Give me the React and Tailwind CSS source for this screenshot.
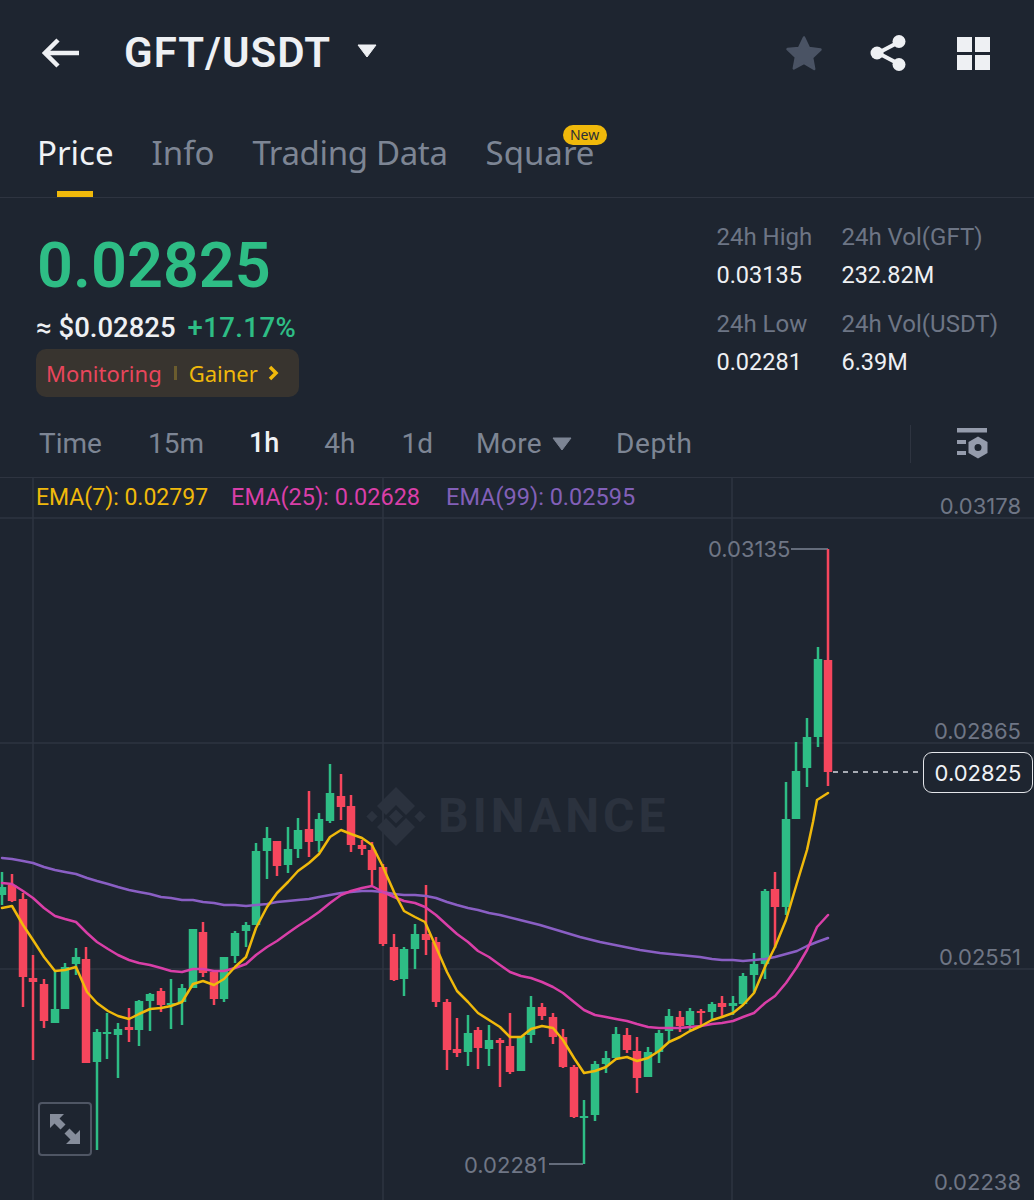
const candles = [
[2,'g',872,905,887,895],[12,'r',874,902,885,901],[23,'r',893,1007,899,977],[33,'r',955,1060,978,982],[44,'r',979,1028,984,1021],[55,'g',970,1023,1009,1023],[65,'g',963,1009,967,1009],[76,'g',948,975,957,964],[86,'r',947,1063,959,1063],[97,'g',1029,1150,1032,1062],[107,'g',1013,1059,1032,1034],[118,'g',1023,1078,1029,1035],[129,'r',1008,1042,1027,1030],[139,'g',1000,1046,1001,1030],[150,'g',993,1031,994,1001],[161,'r',988,1012,991,1005],[171,'g',979,1029,1003,1005],[182,'g',984,1025,988,1002],[193,'g',929,988,929,988],[203,'r',922,977,932,973],[214,'r',972,1005,972,999],[224,'g',957,1002,957,999],[235,'g',931,963,933,956],[246,'g',922,947,925,931],[256,'g',843,925,851,925],[267,'g',827,879,838,851],[277,'r',841,876,841,866],[288,'g',827,873,849,865],[298,'g',818,858,830,849],[309,'r',791,857,829,842],[319,'g',813,852,819,841],[330,'g',764,823,793,821],[341,'r',774,820,796,807],[351,'r',795,852,806,845],[362,'r',840,855,845,849],[372,'r',842,885,850,870],[383,'r',864,946,867,944],[394,'r',934,981,947,980],[404,'g',947,996,949,979],[415,'g',924,969,934,949],[426,'r',885,955,934,940],[436,'r',937,1007,942,1002],[447,'r',999,1070,1002,1050],[457,'r',1018,1057,1049,1053],[468,'g',1015,1066,1033,1052],[478,'r',1027,1069,1030,1048],[489,'g',1025,1066,1040,1049],[500,'r',1038,1087,1040,1043],[510,'r',1013,1074,1046,1072],[521,'g',1036,1071,1036,1071],[531,'g',996,1043,1007,1035],[542,'r',1003,1020,1007,1016],[553,'r',1013,1044,1017,1037],[563,'r',1029,1068,1037,1067],[574,'r',1065,1118,1067,1117],[584,'g',1100,1164,1116,1117],[595,'g',1061,1121,1064,1115],[606,'g',1051,1073,1058,1064],[616,'g',1027,1058,1034,1058],[627,'r',1028,1053,1035,1050],[637,'r',1037,1093,1051,1078],[648,'g',1047,1077,1052,1077],[659,'g',1030,1063,1033,1052],[669,'g',1009,1042,1016,1031],[680,'r',1011,1032,1017,1026],[690,'g',1008,1030,1011,1025],[701,'r',1009,1027,1011,1013],[712,'g',1002,1020,1004,1012],[722,'r',996,1017,1003,1007],[733,'g',996,1015,1003,1006],[743,'g',973,1005,976,1004],[754,'g',953,993,964,975],[765,'g',889,979,891,964],[775,'r',872,948,889,907],[786,'g',782,915,819,907],[796,'g',742,819,771,819],[807,'g',718,787,737,768],[818,'g',647,747,659,737],[828,'r',549,786,660,772],
];

const ema7 = "2,908 12,906 23,925 33,940 44,957 55,971 65,970 76,967 87,992 97,1003 108,1011 118,1016 129,1019 139,1014 150,1009 161,1008 171,1006 182,1002 193,984 203,981 214,985 224,979 235,967 246,957 256,928 267,907 277,893 288,882 298,871 309,863 319,854 330,837 341,830 351,834 362,838 372,845 383,867 394,892 404,911 415,917 425,922 436,947 447,972 457,991 468,1002 478,1013 489,1020 500,1027 510,1037 521,1037 531,1029 542,1026 553,1028 563,1040 574,1058 584,1073 595,1071 606,1067 616,1059 627,1057 637,1061 648,1058 659,1051 669,1042 680,1037 690,1031 701,1026 712,1020 722,1017 733,1013 743,1005 754,993 765,967 775,947 786,920 797,883 807,850 813,822 817,800 828,793";
const ema25 = "2,883 12,884 23,891 33,898 44,908 55,916 65,919 76,922 87,933 97,942 108,949 118,955 129,960 139,963 150,965 161,968 171,971 182,972 193,969 203,969 214,971 224,971 235,968 246,964 256,955 267,947 277,941 288,933 298,926 309,919 319,912 330,903 341,895 351,891 362,888 372,886 383,892 394,897 404,901 415,903 425,907 436,915 447,925 457,934 468,942 478,951 489,957 500,965 510,972 521,976 531,978 542,982 553,987 563,993 574,1002 584,1010 595,1015 606,1017 616,1019 627,1021 637,1024 648,1027 659,1028 669,1028 680,1028 690,1027 701,1026 712,1024 722,1023 733,1021 743,1017 754,1013 765,1003 775,996 786,983 797,967 807,950 817,927 828,915";
const ema99 = "2,858 12,859 23,861 33,863 44,867 55,870 65,872 76,874 87,878 97,881 108,884 118,887 129,890 139,892 150,894 161,897 171,898 182,900 193,900 203,902 214,903 224,905 235,905 246,906 256,905 267,904 277,902 288,901 298,900 309,899 319,897 330,895 341,893 351,892 362,891 372,891 383,892 394,894 404,895 415,895 426,896 436,898 447,902 457,905 468,908 478,910 489,913 500,915 520,920 540,925 560,931 580,937 600,942 620,946 640,950 660,953 680,955 700,957 712,959 722,960 733,960 743,961 754,960 765,959 775,957 786,954 797,951 807,946 817,942 828,938";

const inter = "font-['Inter',sans-serif]";

function Tab({ children, active, className = "" }) {
  return <span className={`${active ? "text-[#f0f2f5]" : "text-[#7d8594]"} ${className}`}>{children}</span>;
}

function Stat({ label, value }) {
  return (
    <div className="flex flex-col">
      <span className="text-[24px] leading-[37px] text-[#6d7585] font-['Roboto',sans-serif]">{label}</span>
      <span className="text-[23.5px] leading-[39px] text-[#eef0f3] font-['Roboto',sans-serif]">{value}</span>
    </div>
  );
}

function AxisLabel({ y, children }) {
  return (
    <span style={{ top: y }} className={`absolute right-[13px] text-[22px] leading-[26px] text-[#6f7685] ${inter}`}>
      {children}
    </span>
  );
}

export default function App() {
  return (
    <div className="w-[1034px] h-[1200px] overflow-hidden bg-[#1e2530] font-['Noto_Sans',sans-serif]">
      <header className="flex items-center h-[106px] pl-[42px] pr-[44px]">
        <svg width="38" height="30" viewBox="0 0 38 30" fill="none" stroke="#eef0f3" strokeWidth="4.5">
          <path d="M16 2 3 15l13 13" />
          <path d="M3 15h34" />
        </svg>
        <span className="ml-[44px] text-[42px] font-semibold leading-none text-[#eef0f3] font-['Roboto',sans-serif] tracking-[1px]">GFT/USDT</span>
        <svg className="ml-[26px] mb-[4px]" width="20" height="14" viewBox="0 0 20 14">
          <path d="M1 1h18L10 13z" fill="#eef0f3" stroke="#eef0f3" strokeLinejoin="round" />
        </svg>
        <div className="ml-auto flex items-center">
          <svg className="mr-[46px]" width="38" height="38" viewBox="0 0 38 38">
            <path d="M19 3.5l5 10.5 11.5 1.5-8.4 8 2.1 11.5L19 29l-10.200 5.500 2.100-11.500-8.400-8L14 14z" fill="#4a5364" stroke="#4a5364" strokeWidth="2.500" strokeLinejoin="round" />
          </svg>
          <svg className="mr-[50px]" width="38" height="38" viewBox="0 0 38 38">
            <path d="M30 8 9 19l21 11" fill="none" stroke="#eef0f3" strokeWidth="4" />
            <circle cx="30" cy="7.500" r="6.500" fill="#eef0f3" />
            <circle cx="8" cy="19" r="6.500" fill="#eef0f3" />
            <circle cx="30" cy="30.500" r="6.500" fill="#eef0f3" />
          </svg>
          <svg width="33" height="33" viewBox="0 0 33 33" fill="#eef0f3">
            <rect x="0" y="0" width="15" height="15" />
            <rect x="18" y="0" width="15" height="15" />
            <rect x="0" y="18" width="15" height="15" />
            <rect x="18" y="18" width="15" height="15" />
          </svg>
        </div>
      </header>

      <nav className="relative flex items-start gap-[38px] h-[92px] pl-[37px] pt-[24px] border-b border-[#2e3440] text-[33px] leading-[46px]">
        <div className="relative">
          <Tab active>Price</Tab>
          <div className="absolute left-[20px] top-[61px] w-[36px] h-[6px] bg-[#f0b90b]" />
        </div>
        <Tab>Info</Tab>
        <Tab className="tracking-[-0.35px]">Trading Data</Tab>
        <div className="relative">
          <Tab>Square</Tab>
          <span className="absolute left-[77px] top-[-5px] w-[44px] h-[20px] flex items-center justify-center rounded-full bg-[#f0b90b] text-[14px] leading-none text-[#2b2f36]">New</span>
        </div>
      </nav>

      <section className="flex justify-between h-[212px] pl-[36px] pr-[36px]">
        <div className="flex flex-col items-start">
          <span className="mt-[32px] ml-[1px] text-[63px] leading-[72px] font-semibold text-[#2ebd85] font-['Roboto',sans-serif]">0.02825</span>
          <div className="mt-[8px] flex items-baseline gap-[12px] text-[27.5px] leading-[36px] font-medium font-['Roboto',sans-serif]">
            <span className="text-[#eef0f3]">≈ $0.02825</span>
            <span className="text-[#2ebd85] tracking-[0.4px]">+17.17%</span>
          </div>
          <div className="mt-[3px] flex items-center w-[263px] h-[48px] pl-[10px] rounded-[10px] bg-[#38342f] text-[22px] leading-none">
            <span className="text-[#e8465c]">Monitoring</span>
            <span className="mx-[12px] w-[3px] h-[14px] bg-[#6b5c2e]" />
            <span className="text-[#f0b90b]">Gainer</span>
            <svg className="ml-[10px]" width="11" height="16" viewBox="0 0 11 16" fill="none" stroke="#f0b90b" strokeWidth="3.500">
              <path d="M2 2l6 6-6 6" />
            </svg>
          </div>
        </div>
        <div className="grid grid-cols-[125px_auto] gap-y-[11px] pt-[21px] content-start">
          <Stat label="24h High" value="0.03135" />
          <Stat label="24h Vol(GFT)" value="232.82M" />
          <Stat label="24h Low" value="0.02281" />
          <Stat label="24h Vol(USDT)" value="6.39M" />
        </div>
      </section>

      <div className="flex items-center gap-[46px] h-[67px] pl-[39px] pr-[46px] text-[28px] leading-none text-[#7d8594] font-['Roboto',sans-serif]">
        <span>Time</span>
        <span>15m</span>
        <span className="-mx-px text-[27px] text-[#f0f2f5] font-medium">1h</span>
        <span>4h</span>
        <span className="mr-[-3px]">1d</span>
        <span className="mr-[-2px] flex items-center gap-[10px]">
          <span className="tracking-[0.4px]">More</span>
          <svg width="20" height="14" viewBox="0 0 20 14"><path d="M1 1h18L10 13z" fill="#7d8594" stroke="#7d8594" strokeLinejoin="round" /></svg>
        </span>
        <span className="tracking-[0.6px]">Depth</span>
        <div className="ml-auto flex items-center gap-[46px]">
          <div className="w-px h-[38px] bg-[#2e3440]" />
          <svg width="31" height="32" viewBox="0 0 31 32" fill="#959cac">
            <rect x="0" y="0" width="30" height="4.500" />
            <rect x="0" y="12" width="9" height="4" />
            <rect x="0" y="23" width="9" height="4" />
            <path fillRule="evenodd" d="M21 8.500l9.500 5.500v11L21 30.500 11.500 25V14zM21 16a3.500 3.500 0 1 0 0 7 3.500 3.500 0 0 0 0-7z" />
          </svg>
        </div>
      </div>

      <div className="relative h-[723px] border-t border-[#2e3440]">
        <svg className="absolute left-0 top-[-1px]" width="1034" height="723" viewBox="0 477 1034 723">
          <g stroke="#2e3440" strokeWidth="1.500">
            <path d="M0 518H1034M0 743H1034M0 969H1034" />
            <path d="M33 477V1200M383 477V1200M732 477V1200" />
          </g>
          <g fill="#2b323e">
            <path d="M396 787l19 19-9 9-10-10-10 10-9-9z" />
            <path d="M396 846l-19-19 9-9 10 10 10-10 9 9z" />
            <rect x="391" y="811.500" width="10" height="10" transform="rotate(45 396 816.500)" />
            <rect x="368" y="812.500" width="8" height="8" transform="rotate(45 372 816.500)" />
            <rect x="416" y="812.500" width="8" height="8" transform="rotate(45 420 816.500)" />
          </g>
          {candles.map(([x, c, wt, wb, bt, bb]) => {
            const col = c === 'g' ? '#2ebd85' : '#f6465d';
            return (
              <g key={x} fill={col}>
                <rect x={x - 1.25} y={wt} width="2.500" height={wb - wt} />
                <rect x={x - 4.25} y={bt} width="8.500" height={Math.max(bb - bt, 2)} />
              </g>
            );
          })}
          <g fill="none" strokeWidth="2.500" strokeLinejoin="round" strokeLinecap="round">
            <polyline points={ema99} stroke="#8a5fc4" />
            <polyline points={ema25} stroke="#d93fa8" />
            <polyline points={ema7} stroke="#f0b90b" />
          </g>
          <path d="M791 549H828" stroke="#7d8594" strokeWidth="1.500" />
          <path d="M828 549V552" stroke="#f6465d" strokeWidth="2" />
          <path d="M549 1164H583" stroke="#7d8594" strokeWidth="1.500" />
          <path d="M833 772H922" stroke="#d5d8de" strokeWidth="1.500" strokeDasharray="5 5" />
        </svg>

        <div className="relative flex items-center gap-[26px] h-[39px] pl-[36px] text-[23.5px] leading-none font-['Roboto',sans-serif]">
          <span className="mr-[-3px] text-[23px] text-[#f0b90b]">EMA(7): 0.02797</span>
          <span className="text-[#d93fa8]">EMA(25): 0.02628</span>
          <span className="text-[#8260b8]">EMA(99): 0.02595</span>
        </div>

        <span className="absolute left-[438px] top-[311px] text-[48px] leading-[54px] font-bold tracking-[4px] text-[#2b323e] font-['Roboto',sans-serif]">BINANCE</span>

        <AxisLabel y={15}>0.03178</AxisLabel>
        <AxisLabel y={240}>0.02865</AxisLabel>
        <AxisLabel y={466}>0.02551</AxisLabel>
        <AxisLabel y={691}>0.02238</AxisLabel>

        <span className={`absolute left-[708px] top-[58px] text-[22px] leading-[26px] text-[#6f7685] ${inter}`}>0.03135</span>
        <span className={`absolute left-[464px] top-[674px] text-[22px] leading-[26px] text-[#6f7685] ${inter}`}>0.02281</span>

        <div className={`absolute left-[923px] top-[274px] w-[110px] h-[41px] flex items-center justify-center rounded-[9px] border-[1.5px] border-[#e4e6ea] bg-[#1e2530] text-[22px] leading-none text-[#f0f2f5] ${inter}`}>0.02825</div>

        <div className="absolute left-[38px] top-[624px] w-[54px] h-[54px] flex items-center justify-center rounded-[4px] border-2 border-[#4f5664] bg-[#1e2530]">
          <svg width="32" height="32" viewBox="0 0 32 32" fill="#868d9b">
            <path d="M1 1h14l-4.500 4.500 6 6-5 5-6-6L1 15z" />
            <path d="M31 31H17l4.500-4.500-6-6 5-5 6 6L31 17z" />
          </svg>
        </div>
      </div>
    </div>
  );
}
